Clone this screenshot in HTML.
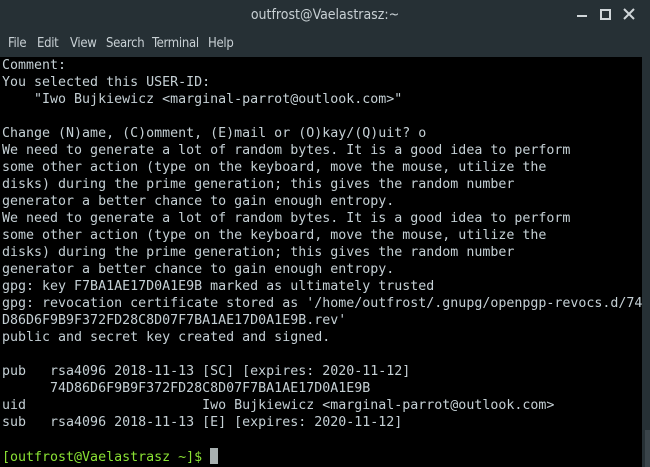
<!DOCTYPE html>
<html><head><style>
html,body{margin:0;padding:0;width:650px;height:467px;overflow:hidden;background:#263035;}
#title{position:absolute;left:0;top:0;width:650px;height:30px;color:#c8d0d4;font:14px "DejaVu Sans Condensed","Liberation Sans",sans-serif;text-align:center;line-height:30px;}
.m{position:absolute;top:36px;color:#c8d0d4;font:13px "DejaVu Sans Condensed","Liberation Sans",sans-serif;letter-spacing:-0.3px;}
.ctl{position:absolute;top:6px;color:#d0d6d9;}
#term{position:absolute;left:0;top:57px;width:642px;height:410px;background:#000;}
pre{margin:0;padding:0 0 0 2px;color:#c5d0d5;font:13.3px/17px "DejaVu Sans Mono","Liberation Mono",monospace;}
#sb{position:absolute;left:642px;top:57px;width:8px;height:410px;background:#263035;}
#thumb{position:absolute;left:645px;top:430px;width:5px;height:37px;background:#3a444a;}
.g{color:#8ae234;}
.cur{display:inline-block;width:8px;height:16px;background:#a8b0b0;vertical-align:-3px;}
</style></head><body>
<div id="title">outfrost@Vaelastrasz:~</div>
<div class="ctl" style="left:577px;top:15px;width:10px;height:2px;background:#d0d6d9"></div>
<div class="ctl" style="left:600px;top:9px;width:7px;height:7px;border:2px solid #d0d6d9"></div>
<svg class="ctl" style="left:623px;top:8px" width="12" height="12"><path d="M1 1L11 11M11 1L1 11" stroke="#d0d6d9" stroke-width="2"/></svg>
<div class="m" style="left:8px">File</div>
<div class="m" style="left:37px">Edit</div>
<div class="m" style="left:70px">View</div>
<div class="m" style="left:106px">Search</div>
<div class="m" style="left:152px">Terminal</div>
<div class="m" style="left:208px">Help</div>
<div id="term"><pre>Comment:
You selected this USER-ID:
    "Iwo Bujkiewicz &lt;marginal-parrot@outlook.com&gt;"

Change (N)ame, (C)omment, (E)mail or (O)kay/(Q)uit? o
We need to generate a lot of random bytes. It is a good idea to perform
some other action (type on the keyboard, move the mouse, utilize the
disks) during the prime generation; this gives the random number
generator a better chance to gain enough entropy.
We need to generate a lot of random bytes. It is a good idea to perform
some other action (type on the keyboard, move the mouse, utilize the
disks) during the prime generation; this gives the random number
generator a better chance to gain enough entropy.
gpg: key F7BA1AE17D0A1E9B marked as ultimately trusted
gpg: revocation certificate stored as '/home/outfrost/.gnupg/openpgp-revocs.d/74
D86D6F9B9F372FD28C8D07F7BA1AE17D0A1E9B.rev'
public and secret key created and signed.

pub   rsa4096 2018-11-13 [SC] [expires: 2020-11-12]
      74D86D6F9B9F372FD28C8D07F7BA1AE17D0A1E9B
uid                      Iwo Bujkiewicz &lt;marginal-parrot@outlook.com&gt;
sub   rsa4096 2018-11-13 [E] [expires: 2020-11-12]

<span class="g">[outfrost@Vaelastrasz ~]$</span> <span class="cur"></span></pre></div>
<div id="sb"></div><div id="thumb"></div>
</body></html>
